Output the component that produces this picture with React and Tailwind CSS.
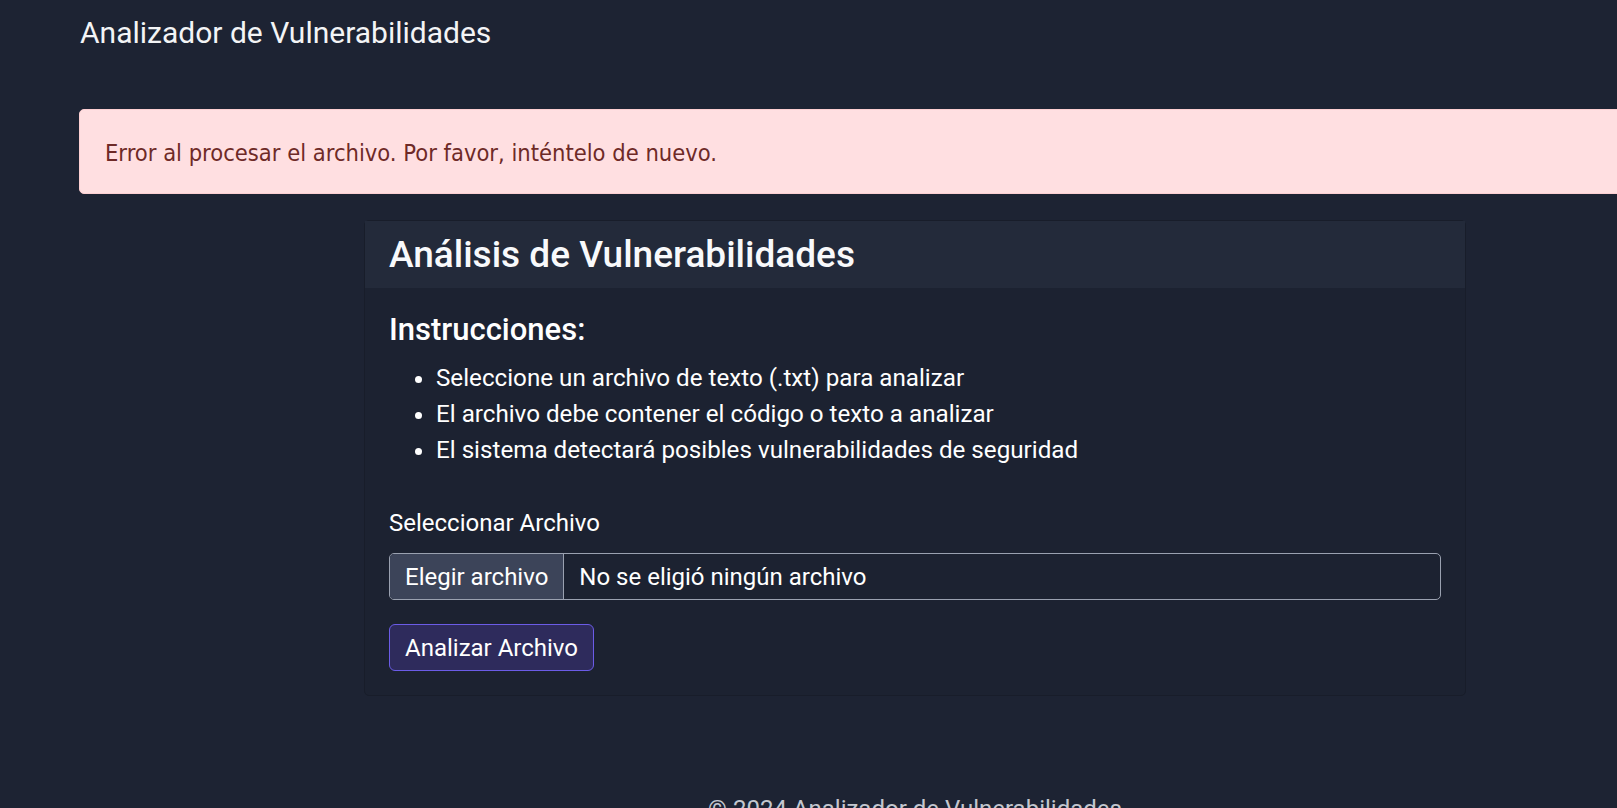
import React from 'react'

const instrucciones = [
  'Seleccione un archivo de texto (.txt) para analizar',
  'El archivo debe contener el código o texto a analizar',
  'El sistema detectará posibles vulnerabilidades de seguridad',
]

function App() {
  return (
    <div className="min-h-screen overflow-hidden bg-[#1d2333] text-white font-['Roboto',sans-serif]">
      <nav className="pl-[80px] pt-[10px] h-[66px]">
        <span className="text-[30px] leading-[45px] text-[#f3f4f6]">Analizador de Vulnerabilidades</span>
      </nav>

      <main className="ml-[79px] w-[1672px] pt-[43px]">
        <div className="h-[85px] flex items-center pl-[25px] pt-[4px] rounded-[5px] border border-[#fccfd2] bg-[#ffdfe1] text-[#6e2a27] text-[23.5px] font-['DejaVu_Sans_Condensed','Liberation_Sans_Narrow',sans-serif]">
          Error al procesar el archivo. Por favor, inténtelo de nuevo.
        </div>

        <div className="mx-auto mt-[26px] w-[1102px] rounded-[5px] border border-[#181d2a] bg-[#1c2231]">
          <div className="bg-[#232a3a] px-[24px] py-[12px]">
            <h2 className="text-[37px] leading-[43px] font-medium text-[#f8f9fb]">Análisis de Vulnerabilidades</h2>
          </div>
          <div className="p-[24px]">
            <h3 className="text-[31px] leading-[36px] font-medium mb-[12px]">Instrucciones:</h3>
            <ul className="list-disc pl-[47px] text-[24.2px] leading-[36px] mb-[37px]">
              {instrucciones.map(item => (
                <li key={item}>{item}</li>
              ))}
            </ul>

            <label htmlFor="archivo" className="block text-[24px] leading-[36px] mb-[12px]">Seleccionar Archivo</label>
            <div className="flex h-[47px] rounded-[5px] border border-[#9aa1b0] overflow-hidden text-[24px] mb-[24px]">
              <span className="flex items-center px-[15px] bg-[#3c4459] border-r border-[#9aa1b0]">Elegir archivo</span>
              <span className="flex items-center px-[15px]">No se eligió ningún archivo</span>
            </div>

            <button className="h-[47px] px-[15px] rounded-[6px] border border-[#6b5ce7] bg-[#2e2b5c] text-[24px]">Analizar Archivo</button>
          </div>
        </div>

        <footer className="mt-[95px] text-center text-[24px] leading-[36px] text-[#c3c7cf] pb-[20px]">
          © 2024 Analizador de Vulnerabilidades
        </footer>
      </main>
    </div>
  )
}

export default App
